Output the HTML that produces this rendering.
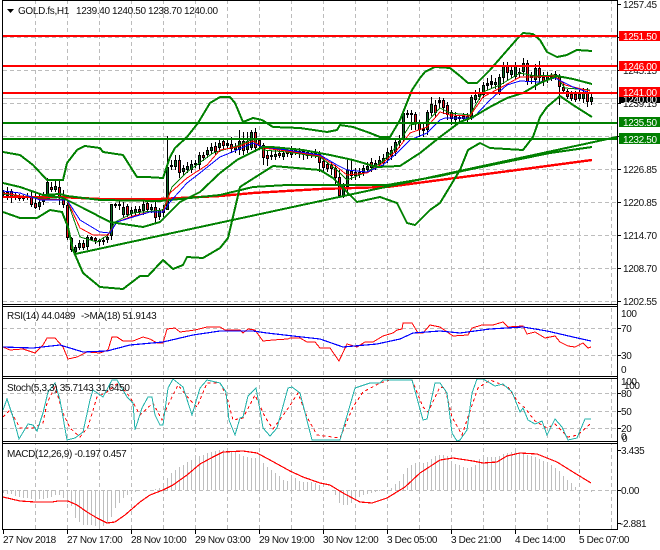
<!DOCTYPE html>
<html><head><meta charset="utf-8"><style>
html,body{margin:0;padding:0;background:#fff;width:660px;height:550px;overflow:hidden}
svg{display:block}
text{font-family:"Liberation Sans",sans-serif;font-size:10px;letter-spacing:-.35px;fill:#111}
.w{fill:#fff}
path,polyline,rect,line{shape-rendering:crispEdges}
polyline{fill:none}
</style></head><body>
<svg width="660" height="550" viewBox="0 0 660 550" xmlns="http://www.w3.org/2000/svg">
<!-- grid -->
<g stroke="#bcbcbc" stroke-width="1" stroke-dasharray="4 3" fill="none">
<path d="M35.5 0V529M67.5 0V529M99.5 0V529M131.5 0V529M163.5 0V529M195.5 0V529M227.5 0V529M259.5 0V529M291.5 0V529M323.5 0V529M355.5 0V529M387.5 0V529M419.5 0V529M451.5 0V529M483.5 0V529M515.5 0V529M547.5 0V529M579.5 0V529M611.5 0V529"/>
<path d="M3 37.5H617M3 70.5H617M3 103.5H617M3 136.5H617M3 169.5H617M3 202.5H617M3 235.5H617M3 268.5H617M3 301.5H617M3 328.5H617M3 355.5H617M3 393.5H617M3 411.5H617M3 428.5H617M3 490.5H617"/>
</g>
<path d="M3 98.5H617" stroke="#c0c0c0" fill="none"/>
<!-- MACD histogram -->
<path fill="none" stroke="#bebebe" stroke-width="1" d="M3.5 490V493M7.5 490V494M11.5 490V494M15.5 490V496M19.5 490V497M23.5 490V498M27.5 490V498M31.5 490V499M35.5 490V499M39.5 490V499M43.5 490V499M47.5 490V498M51.5 490V497M55.5 490V495M59.5 490V495M63.5 490V498M67.5 490V503M71.5 490V506M75.5 490V518M79.5 490V522M83.5 490V525M87.5 490V525M91.5 490V525M95.5 490V526M99.5 490V527M103.5 490V526M107.5 490V523M111.5 490V517M115.5 490V508M119.5 490V503M123.5 490V498M127.5 490V495M131.5 490V493M135.5 490V492M139.5 490V491M155.5 490V489M159.5 490V488M163.5 490V483M167.5 490V478M171.5 490V473M175.5 490V470M179.5 490V467M183.5 490V465M187.5 490V462M191.5 490V460M195.5 490V458M199.5 490V456M203.5 490V455M207.5 490V453M211.5 490V452M215.5 490V451M219.5 490V450M223.5 490V450M227.5 490V450M231.5 490V451M235.5 490V452M239.5 490V454M243.5 490V456M247.5 490V457M251.5 490V458M255.5 490V458M259.5 490V458M263.5 490V463M267.5 490V467M271.5 490V470M275.5 490V473M279.5 490V476M283.5 490V480M287.5 490V481M291.5 490V475M295.5 490V478M299.5 490V481M303.5 490V482M307.5 490V482M311.5 490V482M315.5 490V483M319.5 490V485M335.5 490V495M339.5 490V503M343.5 490V505M347.5 490V505M351.5 490V503M355.5 490V500M359.5 490V497M363.5 490V495M367.5 490V494M371.5 490V493M375.5 490V492M379.5 490V491M391.5 490V488M395.5 490V484M399.5 490V481M403.5 490V474M407.5 490V468M411.5 490V465M415.5 490V463M419.5 490V463M423.5 490V463M427.5 490V462M431.5 490V459M435.5 490V456M439.5 490V455M443.5 490V455M447.5 490V456M451.5 490V461M455.5 490V464M459.5 490V465M463.5 490V467M467.5 490V468M471.5 490V467M475.5 490V465M479.5 490V459M483.5 490V458M487.5 490V457M491.5 490V457M495.5 490V457M499.5 490V456M503.5 490V454M507.5 490V453M511.5 490V452M515.5 490V452M519.5 490V453M523.5 490V454M527.5 490V455M531.5 490V456M535.5 490V457M539.5 490V459M543.5 490V461M547.5 490V463M551.5 490V465M555.5 490V468M559.5 490V471M563.5 490V476M567.5 490V480M571.5 490V483M575.5 490V487M591.5 490V492"/>
<!-- candle wicks -->
<path fill="none" stroke="#000" stroke-width="1" d="M3.5 190V197M7.5 187V200M11.5 189V203M15.5 193V200M19.5 194V201M23.5 195V201M27.5 193V200M31.5 192V207M35.5 192V209M39.5 193V210M43.5 192V205M47.5 178V200M51.5 182V192M55.5 180V192M59.5 180V205M63.5 190V208M67.5 203V240M71.5 237V252M75.5 245V255M79.5 240V250M83.5 240V250M87.5 235V250M91.5 236V241M95.5 237V244M99.5 239V246M103.5 237V245M107.5 234V243M111.5 204V240M115.5 203V208M119.5 201V210M123.5 202V218M127.5 204V217M131.5 207V216M135.5 206V216M139.5 206V215M143.5 201V215M147.5 200V213M151.5 204V213M155.5 200V223M159.5 208V220M163.5 205V217M167.5 136V210M171.5 160V170M175.5 155V170M179.5 155V178M183.5 165V175M187.5 162V173M191.5 160V173M195.5 160V168M199.5 152V170M203.5 152V161M207.5 147V158M211.5 143V154M215.5 142V155M219.5 140V152M223.5 139V150M227.5 138V149M231.5 137V153M235.5 143V153M239.5 130V155M243.5 132V155M247.5 132V153M251.5 130V150M255.5 128V152M259.5 138V150M263.5 143V165M267.5 150V166M271.5 151V160M275.5 150V160M279.5 149V158M283.5 149V160M287.5 148V157M291.5 146V158M295.5 148V155M299.5 148V158M303.5 149V160M307.5 150V159M311.5 151V158M315.5 149V158M319.5 151V172M323.5 158V173M327.5 162V172M331.5 162V175M335.5 165V185M339.5 170V198M343.5 183V198M347.5 160V195M351.5 160V180M355.5 168V180M359.5 168V178M363.5 165V176M367.5 162V173M371.5 158V172M375.5 160V170M379.5 156V168M383.5 154V166M387.5 148V163M391.5 146V160M395.5 138V156M399.5 135V148M403.5 112V142M407.5 110V118M411.5 110V130M415.5 112V130M419.5 120V137M423.5 123V137M427.5 110V135M431.5 97V116M435.5 100V118M439.5 97V108M443.5 98V114M447.5 102V120M451.5 110V125M455.5 112V125M459.5 115V122M463.5 113V121M467.5 113V123M471.5 95V120M475.5 90V103M479.5 88V100M483.5 82V98M487.5 78V90M491.5 75V88M495.5 78V89M499.5 74V95M503.5 62V84M507.5 62V80M511.5 67V78M515.5 62V80M519.5 68V78M523.5 58V76M527.5 60V85M531.5 72V84M535.5 64V90M539.5 61V84M543.5 72V86M547.5 72V83M551.5 73V81M555.5 71V80M559.5 74V105M563.5 82V94M567.5 89V99M571.5 91V101M575.5 91V102M579.5 90V101M583.5 88V103M587.5 88V107M591.5 94V105"/>
<!-- candle bodies outline -->
<path fill="none" stroke="#000" stroke-width="3" d="M3.5 192V195M7.5 192V196M11.5 191V198M15.5 195V197M19.5 196V199M23.5 196V199M27.5 196V198M31.5 197V205M35.5 203V208M39.5 202V207M43.5 198V202M47.5 182V198M51.5 187V190M55.5 186V190M59.5 187V198M63.5 198V205M67.5 205V238M71.5 238V250M75.5 247V252M79.5 243V248M83.5 243V248M87.5 237V247M91.5 237V240M95.5 238V241M99.5 240V242M103.5 240V242M107.5 237V240M111.5 204V236M115.5 204V206M119.5 204V206M123.5 207V215M127.5 206V215M131.5 210V214M135.5 209V213M139.5 209V212M143.5 204V211M147.5 203V210M151.5 207V210M155.5 207V218M159.5 210V217M163.5 209V213M167.5 167V210M171.5 165V167M175.5 160V167M179.5 160V173M183.5 168V172M187.5 166V170M191.5 164V170M195.5 163V165M199.5 155V165M203.5 155V158M207.5 150V155M211.5 147V151M215.5 146V152M219.5 143V148M223.5 141V146M227.5 143V146M231.5 144V149M235.5 147V150M239.5 141V150M243.5 141V151M247.5 141V150M251.5 132V148M255.5 132V148M259.5 140V146M263.5 145V158M267.5 155V159M271.5 155V157M275.5 154V157M279.5 153V156M283.5 153V157M287.5 151V154M291.5 148V155M295.5 150V152M299.5 151V154M303.5 151V155M307.5 152V156M311.5 153V156M315.5 152V154M319.5 154V163M323.5 161V168M327.5 164V169M331.5 165V169M335.5 168V178M339.5 177V196M343.5 185V196M347.5 170V187M351.5 171V176M355.5 172V176M359.5 172V175M363.5 168V173M367.5 166V170M371.5 162V168M375.5 163V167M379.5 160V165M383.5 158V163M387.5 152V160M391.5 150V156M395.5 142V152M399.5 141V143M403.5 113V140M407.5 113V115M411.5 113V115M415.5 114V123M419.5 123V130M423.5 128V131M427.5 112V130M431.5 104V113M435.5 105V113M439.5 100V103M443.5 100V108M447.5 105V115M451.5 112V119M455.5 116V120M459.5 117V119M463.5 116V119M467.5 116V120M471.5 97V117M475.5 95V100M479.5 92V97M483.5 85V95M487.5 83V86M491.5 81V85M495.5 82V85M499.5 77V92M503.5 65V78M507.5 65V73M511.5 70V75M515.5 66V77M519.5 72V74M523.5 63V72M527.5 63V82M531.5 75V78M535.5 68V80M539.5 68V78M543.5 77V82M547.5 76V80M551.5 76V78M555.5 74V78M559.5 76V87M563.5 87V91M567.5 91V97M571.5 94V99M575.5 94V100M579.5 94V99M583.5 92V99M587.5 92V102M591.5 97V102"/>
<!-- red fills -->
<path fill="none" stroke="#e6101a" stroke-width="1" d="M7.5 193V195M11.5 192V197M19.5 197V198M31.5 198V204M35.5 204V207M51.5 188V189M59.5 188V197M63.5 199V204M67.5 206V237M71.5 239V249M83.5 244V247M95.5 239V240M127.5 207V214M139.5 210V211M147.5 204V209M155.5 208V217M179.5 161V172M203.5 156V157M215.5 147V151M223.5 142V145M231.5 145V148M243.5 142V150M255.5 133V147M259.5 141V145M263.5 146V157M267.5 156V158M279.5 154V155M287.5 152V153M303.5 152V154M311.5 154V155M319.5 155V162M323.5 162V167M327.5 165V168M331.5 166V168M335.5 169V177M339.5 178V195M351.5 172V175M371.5 163V167M415.5 115V122M419.5 124V129M435.5 106V112M443.5 101V107M447.5 106V114M451.5 113V118M463.5 117V118M507.5 66V72M527.5 64V81M539.5 69V77M543.5 78V81M559.5 77V86M563.5 88V90M567.5 92V96M571.5 95V98M575.5 95V99M587.5 93V101"/>
<!-- green fills -->
<path fill="none" stroke="#0a6a24" stroke-width="1" d="M39.5 203V206M43.5 199V201M47.5 183V197M55.5 187V189M75.5 248V251M79.5 244V247M87.5 238V246M107.5 238V239M111.5 205V235M123.5 208V214M131.5 211V213M135.5 210V212M143.5 205V210M151.5 208V209M159.5 211V216M163.5 210V212M167.5 168V209M175.5 161V166M183.5 169V171M187.5 167V169M191.5 165V169M199.5 156V164M207.5 151V154M211.5 148V150M219.5 144V147M235.5 148V149M239.5 142V149M247.5 142V149M251.5 133V147M275.5 155V156M283.5 154V156M291.5 149V154M299.5 152V153M307.5 153V155M343.5 186V195M347.5 171V186M355.5 173V175M359.5 173V174M363.5 169V172M367.5 167V169M375.5 164V166M379.5 161V164M383.5 159V162M387.5 153V159M391.5 151V155M395.5 143V151M403.5 114V139M427.5 113V129M431.5 105V112M455.5 117V119M467.5 117V119M471.5 98V116M475.5 96V99M479.5 93V96M483.5 86V94M495.5 83V84M499.5 78V91M503.5 66V77M511.5 71V74M515.5 67V76M523.5 64V71M535.5 69V79M547.5 77V79M555.5 75V77M579.5 95V98M583.5 93V98M591.5 98V101"/>
<!-- long MAs -->
<polyline stroke="#ff0000" stroke-width="2.4" points="3,197 60,197 100,199 160,199 220,196 253,193 320,189 387,187 440,180 517,170 592,160"/>
<polyline stroke="#008000" stroke-width="2" points="43,195 60,194 67,196 100,200 160,201 220,195 253,187 287,185 353,185 387,185 440,176 467,170 550,153 592,147"/>
<polyline stroke="#008000" stroke-width="2" points="75,254 617,137"/>
<!-- fast MAs -->
<polyline stroke="#008000" stroke-width="1" points="3,194 40,198 67,200 80,237 97,242 108,235 115,222 133,213 163,210 172,187 187,172 213,153 237,146 253,139 263,150 287,152 320,157 337,170 347,180 367,172 383,161 397,146 410,125 427,122 440,108 450,113 470,115 483,92 500,85 520,73 535,76 555,75 565,88 590,90"/>
<polyline stroke="#ff0000" stroke-width="1" points="3,193 40,199 67,200 80,228 93,235 108,235 117,222 133,216 150,212 163,212 170,193 187,178 207,165 220,150 237,147 253,141 263,148 287,151 320,156 337,167 347,175 367,173 383,163 397,150 410,133 427,127 440,112 450,115 470,116 483,97 500,88 520,77 535,77 555,76 565,85 590,91"/>
<polyline stroke="#0000ff" stroke-width="1" points="3,191 20,193 40,200 67,200 80,220 100,232 110,233 117,222 133,217 150,212 163,212 170,202 187,183 200,173 220,157 237,150 253,143 263,147 287,150 320,155 337,165 347,170 367,172 383,165 397,153 410,140 427,133 440,120 445,118 473,118 490,100 507,85 520,81 540,82 555,78 573,87 590,93"/>
<!-- Bollinger -->
<g stroke="#008000" stroke-width="2">
<polyline points="3,152 20,155 33,165 47,180 63,180 67,163 77,150 85,146 100,148 103,152 123,155 137,177 147,177 163,178 170,157 175,148 187,137 198,123 210,103 220,97 230,97 235,103 243,122 253,118 262,120 273,127 300,128 327,132 337,130 340,125 353,127 370,133 380,137 390,137 400,120 412,90 420,78 425,72 435,67 450,68 460,76 468,83 477,83 490,70 503,55 517,39 523,33 533,34 540,40 547,52 557,57 567,55 577,50 592,51"/>
<polyline points="3,183 20,187 43,195 63,198 83,208 110,222 143,227 160,222 180,202 200,192 220,173 237,160 263,147 272,147 303,150 330,155 353,160 377,167 400,166 420,153 440,137 460,122 473,117 490,107 507,98 523,93 540,83 557,76 573,79 592,84"/>
<polyline points="3,212 20,218 37,218 50,210 62,212 68,227 73,250 83,273 100,287 123,289 140,276 148,276 163,260 173,269 183,265 187,257 203,258 220,248 228,238 240,187 243,185 273,166 320,170 333,178 357,202 380,197 397,203 407,223 415,225 430,210 440,203 460,170 468,150 480,143 490,148 523,150 533,137 540,117 547,107 560,96 573,105 592,117"/>
</g>
<!-- levels -->
<rect x="3" y="35" width="614" height="2" fill="#ff0000"/>
<rect x="3" y="65" width="614" height="2" fill="#ff0000"/>
<rect x="3" y="92" width="614" height="2" fill="#ff0000"/>
<rect x="3" y="122" width="614" height="2" fill="#008000"/>
<rect x="3" y="138" width="614" height="2" fill="#008000"/>
<!-- RSI -->
<polyline stroke="#ff0000" stroke-width="1" points="3,347 10,350 23,349 35,353 43,345 47,338 55,338 63,347 68,359 77,357 87,352 100,353 108,350 112,337 117,337 123,341 133,341 143,337 150,339 157,343 163,343 167,329 175,328 180,332 195,330 207,327 220,327 225,330 240,330 243,333 248,329 255,330 263,341 273,340 288,339 290,338 300,338 307,342 315,342 320,348 330,348 339,361 347,344 357,347 365,342 373,342 383,336 393,333 397,330 402,329 403,323 412,323 418,333 423,333 430,325 440,327 453,336 468,335 472,328 482,325 493,325 503,322 508,327 523,326 527,334 535,332 545,338 555,336 560,342 568,346 575,347 583,343 588,348 591,347"/>
<polyline stroke="#0000ff" stroke-width="1.2" points="3,347 33,348 60,345 83,352 107,351 130,345 163,342 193,335 220,331 253,331 267,333 293,336 320,339 343,347 377,344 400,339 413,333 440,331 460,333 490,329 523,327 547,331 573,337 591,341"/>
<!-- Stoch -->
<polyline stroke="#ff0000" stroke-width="1" stroke-dasharray="3 3" points="3,417 10,410 20,428 33,428 43,423 47,403 55,387 63,413 70,428 80,437 88,427 97,397 107,392 118,383 130,397 140,415 153,403 162,420 167,407 178,385 190,400 197,407 207,383 220,383 227,397 233,420 243,418 255,395 265,417 273,429 287,410 298,393 307,417 317,435 340,438 353,407 363,392 380,383 390,380 412,380 423,407 428,412 440,387 445,388 452,417 462,435 468,417 478,388 490,380 508,387 518,402 525,408 535,421 547,428 555,424 568,437 578,435 591,423"/>
<polyline stroke="#20b2aa" stroke-width="1" points="3,410 7,399 13,417 19,439 28,424 33,425 37,431 43,413 48,392 55,383 60,400 67,440 75,438 83,432 90,400 93,390 103,397 112,380 117,380 127,397 133,403 135,430 142,408 148,397 152,397 155,415 160,425 163,425 168,388 173,379 183,387 192,415 200,388 207,380 220,383 226,392 229,420 235,435 240,418 243,417 248,396 256,388 260,410 263,428 270,436 277,428 288,388 292,387 300,393 312,440 340,440 355,388 370,383 380,383 383,380 412,380 423,420 427,419 435,383 440,383 447,393 452,433 457,441 460,440 467,430 472,393 477,379 483,379 495,386 503,384 512,392 520,412 523,408 528,420 535,424 542,421 547,435 555,419 562,427 568,440 577,438 585,419 591,419"/>
<!-- MACD line -->
<polyline stroke="#ff0000" stroke-width="1.2" points="3,497 20,501 35,502 52,502 58,501 68,501 77,505 87,512 97,518 107,523 115,522 125,515 140,502 150,495 163,490 173,485 187,475 200,464 213,457 223,452 243,451 257,453 270,460 290,471 303,477 320,483 330,485 343,493 360,502 372,503 387,498 405,487 420,473 440,460 453,458 473,461 483,463 497,462 507,456 520,453 537,454 557,462 573,472 591,483"/>
<!-- frame -->
<g fill="#fff"><rect x="3" y="305" width="614" height="1"/><rect x="3" y="377" width="614" height="1"/><rect x="3" y="442" width="614" height="1"/></g>
<g fill="#000">
<rect x="2" y="0" width="616" height="1"/>
<rect x="2" y="304" width="616" height="1"/><rect x="2" y="306" width="616" height="1"/>
<rect x="2" y="376" width="616" height="1"/><rect x="2" y="378" width="616" height="1"/>
<rect x="2" y="441" width="616" height="1"/><rect x="2" y="443" width="616" height="1"/>
<rect x="2" y="529" width="616" height="1"/>
<rect x="2" y="0" width="1" height="530"/><rect x="617" y="0" width="1" height="530"/>
</g>
<path fill="none" stroke="#000" d="M618 4.5h3M618 37.5h3M618 70.5h3M618 103.5h3M618 136.5h3M618 169.5h3M618 202.5h3M618 235.5h3M618 268.5h3M618 301.5h3M618 328.5h3M618 355.5h3M618 393.5h3M618 411.5h3M618 428.5h3M618 450.5h3M618 490.5h3M618 523.5h3M3.5 530v4M67.5 530v4M131.5 530v4M195.5 530v4M259.5 530v4M323.5 530v4M387.5 530v4M451.5 530v4M515.5 530v4M579.5 530v4"/>
<!-- header -->
<polygon points="7,9 14,9 10.5,13" fill="#000"/>
<text x="18" y="14">GOLD.fs,H1</text>
<text x="76" y="14">1239.40</text><text x="112" y="14">1240.50</text><text x="148" y="14">1238.70</text><text x="184" y="14">1240.00</text>
<text x="7" y="319">RSI(14) 44.0489</text><text x="81" y="319">-&gt;MA(18) 51.9143</text>
<text x="7" y="391">Stoch(5,3,3) 35.7143 31.6450</text>
<text x="7" y="457">MACD(12,26,9) -0.197 0.457</text>
<!-- axis -->
<text x="623" y="8">1257.45</text>
<text x="623" y="74">1245.15</text>
<text x="623" y="107">1239.15</text>
<text x="623" y="173">1226.85</text>
<text x="623" y="206">1220.85</text>
<text x="623" y="239">1214.70</text>
<text x="623" y="272">1208.70</text>
<text x="623" y="305">1202.55</text>
<rect x="619" y="95" width="41" height="8" fill="#000"/>
<text class="w" x="623" y="103">1240.00</text>
<rect x="619" y="31" width="41" height="10" fill="#ff0000"/><text class="w" x="623" y="40">1251.50</text>
<rect x="619" y="61" width="41" height="10" fill="#ff0000"/><text class="w" x="623" y="70">1246.00</text>
<rect x="619" y="87" width="41" height="10" fill="#ff0000"/><text class="w" x="623" y="96">1241.00</text>
<rect x="619" y="117" width="41" height="10" fill="#008000"/><text class="w" x="623" y="126">1235.50</text>
<rect x="619" y="133" width="41" height="11" fill="#008000"/><text class="w" x="623" y="143">1232.50</text>
<text x="621" y="317">100</text><text x="621" y="332">70</text><text x="621" y="359">30</text><text x="621" y="373">0</text>
<text x="621" y="385">100</text><text x="624" y="389">100</text><text x="621" y="397">80</text><text x="621" y="415">50</text><text x="621" y="432">20</text><text x="621" y="440">0</text><text x="622" y="442">0</text>
<text x="621" y="454">3.435</text><text x="621" y="494">0.00</text><text x="620" y="527">-2.881</text>
<text x="3" y="543">27 Nov 2018</text>
<text x="67" y="543">27 Nov 17:00</text>
<text x="131" y="543">28 Nov 10:00</text>
<text x="195" y="543">29 Nov 03:00</text>
<text x="259" y="543">29 Nov 19:00</text>
<text x="323" y="543">30 Nov 12:00</text>
<text x="387" y="543">3 Dec 05:00</text>
<text x="451" y="543">3 Dec 21:00</text>
<text x="515" y="543">4 Dec 14:00</text>
<text x="579" y="543">5 Dec 07:00</text>
</svg>
</body></html>
